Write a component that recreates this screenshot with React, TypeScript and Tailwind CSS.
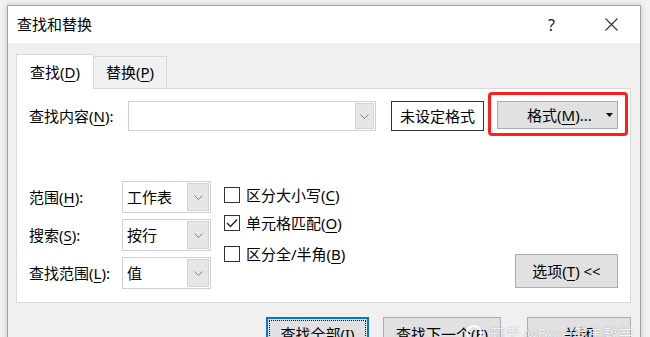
import React from "react";

function U({ children }: { children: React.ReactNode }) {
  return <span className="underline decoration-1 underline-offset-[3px]">{children}</span>;
}

function Chevron() {
  return (
    <svg width="9" height="5" viewBox="0 0 9 5">
      <path d="M0.5 0.5L4.5 4.5L8.5 0.5" stroke="#808080" strokeWidth="1" fill="none" />
    </svg>
  );
}

function Select({ value }: { value: string }) {
  return (
    <div className="flex h-[32px] w-[89px] items-stretch border border-[#cfcfcf] bg-white">
      <div className="flex flex-1 items-center pl-[4px]">{value}</div>
      <div className="m-[1px] flex w-[22px] items-center justify-center border border-[#d4d4d4] bg-[#e6e6e6]">
        <Chevron />
      </div>
    </div>
  );
}

function Check({ checked, children }: { checked?: boolean; children: React.ReactNode }) {
  return (
    <div className="flex h-[20px] items-center">
      <div className="flex h-[16px] w-[16px] items-center justify-center border border-[#333] bg-white">
        {checked && (
          <svg width="12" height="10" viewBox="0 0 12 10">
            <path d="M1 5L4.5 8.5L11 1.5" stroke="#222" strokeWidth="1.4" fill="none" />
          </svg>
        )}
      </div>
      <span className="ml-[6px]">{children}</span>
    </div>
  );
}

export default function App() {
  return (
    <div className="relative h-[337px] w-[650px] overflow-hidden bg-[#f2f2f2] pl-[7px] pt-[5px] font-['Noto_Sans','Noto_Sans_CJK_SC',sans-serif] text-[15px] text-black">
      <div className="w-[634px] border border-[#a3a3a3] bg-[#f0f0f0] shadow-[0_0_6px_rgba(0,0,0,0.2)]">
        {/* title bar */}
        <div className="flex h-[37px] items-center bg-white pl-[9px]">
          <span>查找和替换</span>
          <span className="ml-auto text-[16px] text-[#222]">?</span>
          <svg className="ml-[50px] mr-[22px]" width="13" height="13" viewBox="0 0 13 13">
            <path d="M0.5 0.5L12.5 12.5M12.5 0.5L0.5 12.5" stroke="#333" strokeWidth="1.1" />
          </svg>
        </div>

        <div className="pb-[20px] pl-[8px] pr-[9px] pt-[11px]">
          {/* tabs */}
          <div className="flex h-[34px] items-end">
            <div className="relative z-10 -mb-[1px] flex h-[35px] w-[78px] items-center justify-center border border-b-0 border-[#d9d9d9] bg-white">
              查找(<U>D</U>)
            </div>
            <div className="flex h-[32px] w-[73px] items-center justify-center border border-b-0 border-l-0 border-[#d9d9d9] bg-[#f0f0f0]">
              替换(<U>P</U>)
            </div>
          </div>

          {/* panel */}
          <div className="h-[215px] border border-[#d9d9d9] bg-white pl-[12px] pt-[12px]">
            <div className="flex h-[30px] items-center">
              <div className="w-[99px]">
                查找内容(<U>N</U>):
              </div>
              <div className="flex h-[30px] w-[248px] items-stretch border border-[#cfcfcf] bg-white">
                <div className="flex-1" />
                <div className="m-[1px] flex w-[19px] items-center justify-center border border-[#d4d4d4] bg-[#e6e6e6]">
                  <Chevron />
                </div>
              </div>
              <div className="ml-[15px] flex h-[30px] w-[93px] items-center justify-center border border-[#333] bg-white">
                未设定格式
              </div>
              <div className="-mt-[9px] ml-[4px] h-[44px] w-[140px] self-start rounded-[4px] border-[3px] border-[#ff1f1f] pl-[6px] pt-[6px]">
                <div className="flex h-[28px] w-[121px] items-center border border-[#adadad] bg-[#e1e1e1] pl-[29px] pr-[4px]">
                  <span>
                    格式(<U>M</U>)...
                  </span>
                  <svg className="ml-auto" width="7" height="4" viewBox="0 0 7 4">
                    <path d="M0 0H7L3.5 4Z" fill="#111" />
                  </svg>
                </div>
              </div>
            </div>

            <div className="mt-[50px] flex items-start">
              <div className="flex flex-col gap-[6px]">
                <div className="flex h-[32px] items-center">
                  <div className="w-[93px]">
                    范围(<U>H</U>):
                  </div>
                  <Select value="工作表" />
                </div>
                <div className="flex h-[32px] items-center">
                  <div className="w-[93px]">
                    搜索(<U>S</U>):
                  </div>
                  <Select value="按行" />
                </div>
                <div className="flex h-[32px] items-center">
                  <div className="w-[93px]">
                    查找范围(<U>L</U>):
                  </div>
                  <Select value="值" />
                </div>
              </div>

              <div className="ml-[13px] flex flex-col pt-[4px]">
                <Check>
                  区分大小写(<U>C</U>)
                </Check>
                <div className="mt-[8px]">
                  <Check checked>
                    单元格匹配(<U>O</U>)
                  </Check>
                </div>
                <div className="mt-[11px]">
                  <Check>
                    区分全/半角(<U>B</U>)
                  </Check>
                </div>
              </div>

              <div className="mb-[1px] ml-auto mr-[12px] flex h-[34px] w-[103px] items-center justify-center self-end border border-[#adadad] bg-[#e1e1e1]">
                选项(<U>T</U>)&nbsp;&lt;&lt;
              </div>
            </div>
          </div>

          {/* bottom buttons */}
          <div className="mt-[14px] flex justify-end">
            <div className="h-[34px] w-[103px] border-2 border-[#0078d7] bg-[#e1e1e1] p-[1px]">
              <div className="flex h-full w-full items-center justify-center border border-dotted border-[#111]">
                查找全部(<U>I</U>)
              </div>
            </div>
            <div className="ml-[14px] flex h-[34px] w-[118px] items-center justify-center border border-[#adadad] bg-[#e1e1e1]">
              查找下一个(<U>F</U>)
            </div>
            <div className="ml-[26px] flex h-[34px] w-[104px] items-center justify-center border border-[#adadad] bg-[#e1e1e1]">
              关闭
            </div>
          </div>
        </div>
      </div>

      {/* watermark */}
      <div className="absolute left-[466px] top-[322px] flex items-center gap-[8px] text-white/90 [text-shadow:0_0_1px_rgba(0,0,0,0.45)]">
        <div className="h-[16px] w-[16px] rounded-full border-2 border-white/90" />
        <span>知乎 @Excel简单教学</span>
      </div>
    </div>
  );
}
